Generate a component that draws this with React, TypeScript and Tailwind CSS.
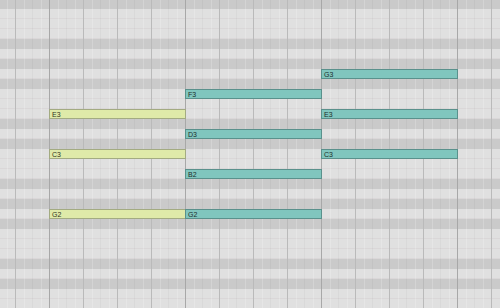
import React from 'react';

// Piano-roll lane layout: 10px per row, black-key rows are darker.
// Octave pattern (top to bottom) starting at C#: C#, C, gap, B, A#, A, G#, G, F#, F, gap, E, D#, D
const OCTAVE: { name: string; dark: boolean }[] = [
  { name: 'C#', dark: true },
  { name: 'C', dark: false },
  { name: '', dark: false },
  { name: 'B', dark: false },
  { name: 'A#', dark: true },
  { name: 'A', dark: false },
  { name: 'G#', dark: true },
  { name: 'G', dark: false },
  { name: 'F#', dark: true },
  { name: 'F', dark: false },
  { name: '', dark: false },
  { name: 'E', dark: false },
  { name: 'D#', dark: true },
  { name: 'D', dark: false },
];

const ROWS = Array.from({ length: 32 }, (_, i) => OCTAVE[i % OCTAVE.length]);

const ROW_H = 10;
const BAR_W = 136;
const GRID_X = 49;

type Note = { label: string; row: number; bar: number; kind: 'lime' | 'teal' };

const NOTES: Note[] = [
  { label: 'E3', row: 11, bar: 0, kind: 'lime' },
  { label: 'C3', row: 15, bar: 0, kind: 'lime' },
  { label: 'G2', row: 21, bar: 0, kind: 'lime' },
  { label: 'F3', row: 9, bar: 1, kind: 'teal' },
  { label: 'D3', row: 13, bar: 1, kind: 'teal' },
  { label: 'B2', row: 17, bar: 1, kind: 'teal' },
  { label: 'G2', row: 21, bar: 1, kind: 'teal' },
  { label: 'G3', row: 7, bar: 2, kind: 'teal' },
  { label: 'E3', row: 11, bar: 2, kind: 'teal' },
  { label: 'C3', row: 15, bar: 2, kind: 'teal' },
];

const Beat = ({ bar }: { bar: boolean }) => (
  <div
    className={`w-[34px] shrink-0 h-full flex border-l ${bar ? 'border-[#a8a8a8]' : 'border-[#bababa]'}`}
  >
    <div className="flex-1 border-r border-white/20" />
    <div className="flex-1 border-r border-black/[0.03]" />
    <div className="flex-1 border-r border-white/20" />
    <div className="flex-1" />
  </div>
);

export default function App() {
  return (
    <div
      className="relative w-[500px] h-[308px] overflow-hidden bg-[#e0e0e0] select-none"
      style={{ fontFamily: '"Liberation Sans", Arial, sans-serif' }}
    >
      {/* ═══ Key lanes ═══ */}
      <div className="flex flex-col -mt-px">
        {ROWS.map((r, i) => (
          <div
            key={i}
            className={`h-[10px] shrink-0 ${
              r.dark ? 'bg-[#cacaca]' : 'bg-[#e0e0e0] border-b border-[#dad7d8]'
            }`}
          />
        ))}
      </div>

      {/* ═══ Beat / bar grid ═══ */}
      <div className="absolute inset-0 flex pointer-events-none">
        <div className="w-[15px] shrink-0 h-full flex">
          <div className="flex-1 border-r border-white/20" />
          <div className="flex-1" />
        </div>
        {Array.from({ length: 15 }).map((_, i) => (
          <Beat key={i} bar={i % 4 === 1} />
        ))}
      </div>

      {/* ═══ Notes ═══ */}
      {NOTES.map((n, i) => (
        <div
          key={i}
          className={`absolute h-[10px] border flex items-center pl-[2px] text-[7px] leading-none ${
            n.kind === 'teal'
              ? 'bg-[#80c6be] border-[#5a918c] text-[#1c2e2c]'
              : 'bg-[#dfeaa9] border-[#a3ab82] text-[#2f3522]'
          }`}
          style={{
            top: n.row * ROW_H - 1,
            left: GRID_X + n.bar * BAR_W,
            width: BAR_W + 1,
          }}
        >
          {n.label}
        </div>
      ))}
    </div>
  );
}
